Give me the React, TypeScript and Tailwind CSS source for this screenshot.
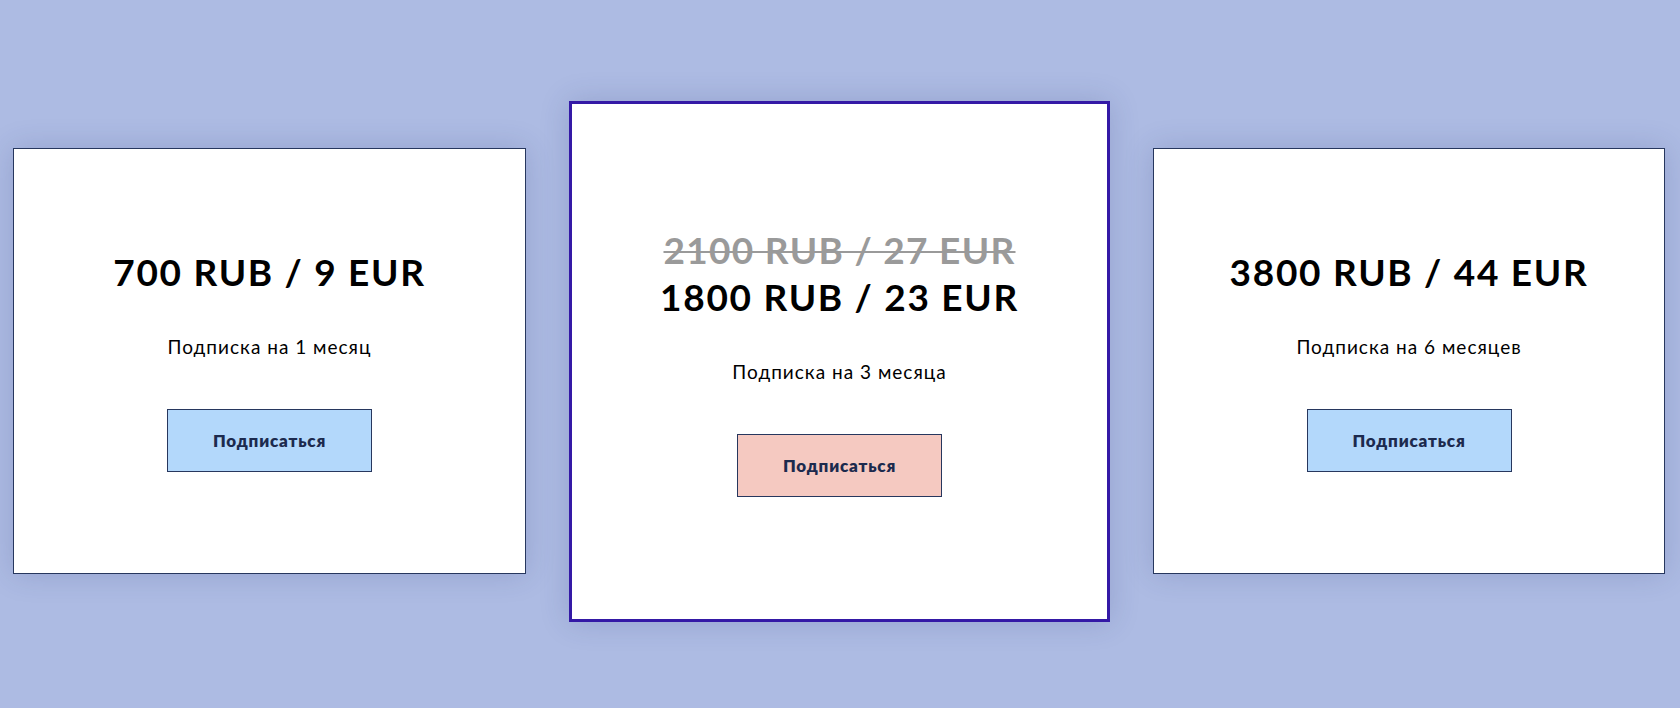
const plans = [
  {
    id: 1,
    price: "700 RUB / 9 EUR",
    label: "Подписка на 1 месяц",
    width: "w-[513px]",
  },
  {
    id: 3,
    oldPrice: "2100 RUB / 27 EUR",
    price: "1800 RUB / 23 EUR",
    label: "Подписка на 3 месяца",
    featured: true,
    width: "w-[541px]",
  },
  {
    id: 6,
    price: "3800 RUB / 44 EUR",
    label: "Подписка на 6 месяцев",
    width: "w-[512px]",
  },
];

type Plan = (typeof plans)[number];

function PlanCard({ plan }: { plan: Plan }) {
  const featured = !!plan.featured;

  return (
    <div
      className={`${plan.width} shrink-0 flex flex-col items-center justify-center bg-white shadow-[0_0_28px_rgba(40,50,110,0.18)] ${
        featured
          ? "h-[521px] border-[3px] border-[#3419a6]"
          : "h-[426px] border border-[#27375e]"
      }`}
    >
      {plan.oldPrice && (
        <div className="text-[37px] leading-[50px] font-bold text-[#9a9a9a] line-through decoration-2 tracking-[1.3px]">
          {plan.oldPrice}
        </div>
      )}
      <div className="text-[37px] leading-[44px] font-bold text-black tracking-[1.7px]">
        {plan.price}
      </div>

      <div className="mt-[41px] text-[19px] leading-[24px] text-black tracking-[1px]">
        {plan.label}
      </div>

      <button
        className={`mt-[50px] w-[205px] h-[63px] border border-[#27375e] text-[17px] font-extrabold text-[#1c2a4e] tracking-[0.8px] ${
          featured ? "bg-[#f5c9c1]" : "bg-[#b3d8fb]"
        }`}
      >
        Подписаться
      </button>
    </div>
  );
}

export default function App() {
  return (
    <div
      className="min-h-[708px] w-full bg-[#adbbe3] flex items-center gap-[43px] pl-[13px] pt-[14px]"
      style={{ fontFamily: "Lato, 'Noto Sans', sans-serif" }}
    >
      {plans.map((plan) => (
        <PlanCard key={plan.id} plan={plan} />
      ))}
    </div>
  );
}
